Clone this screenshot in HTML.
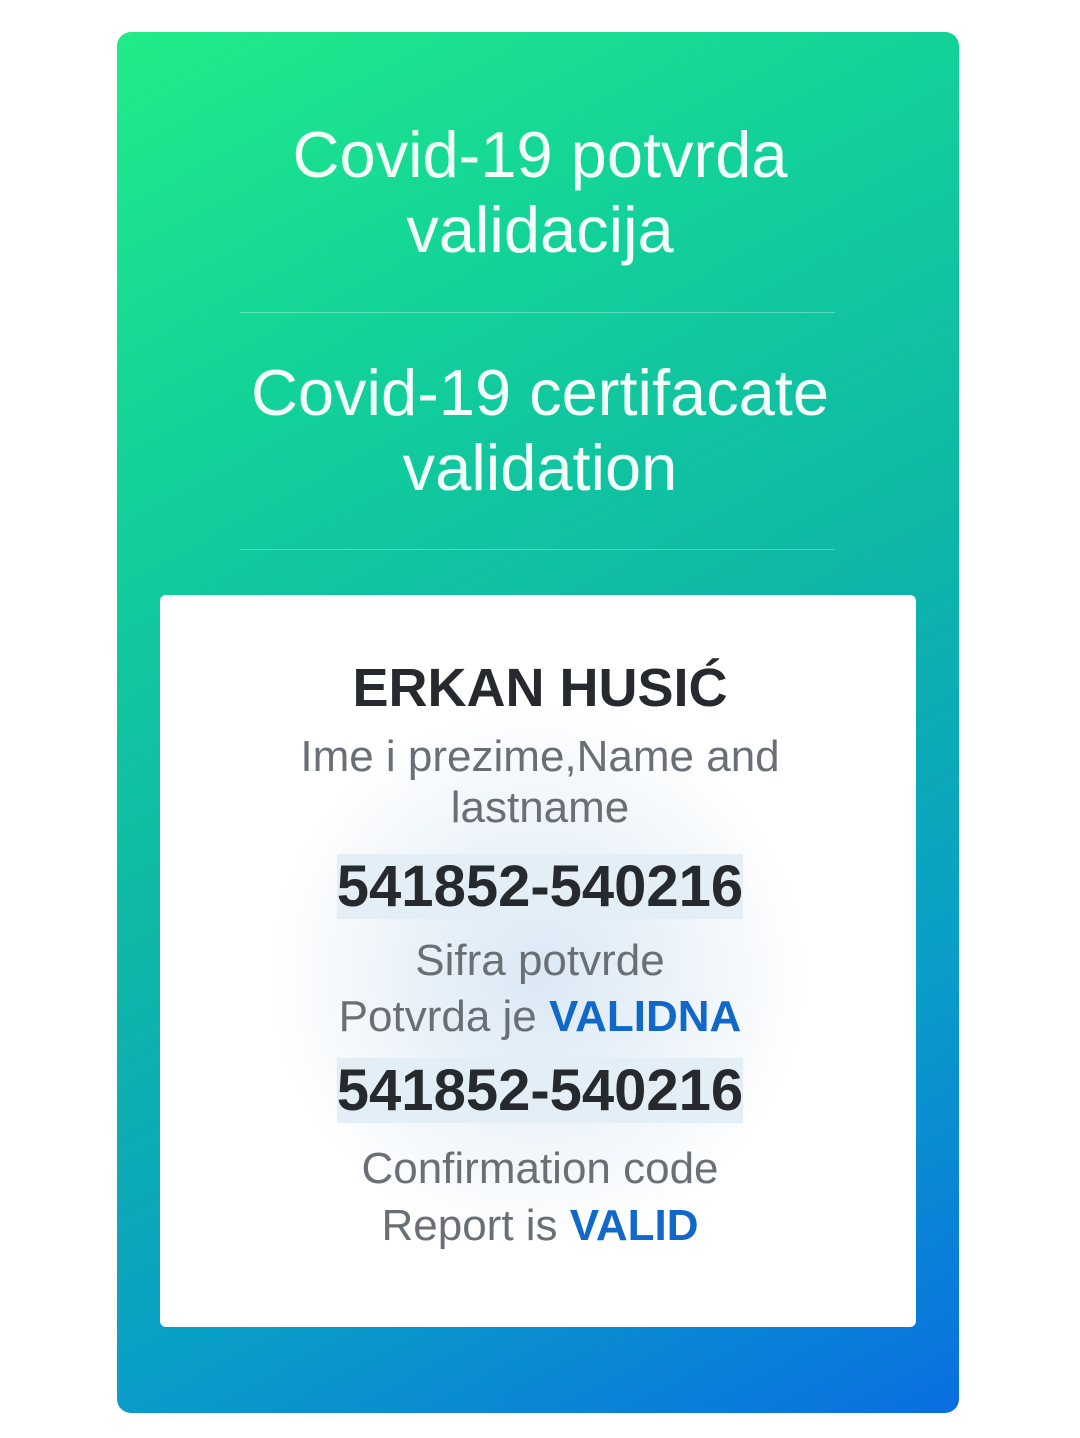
<!DOCTYPE html>
<html><head><meta charset="utf-8"><style>
html,body{margin:0;padding:0;background:#fff;}
body{width:1080px;height:1438px;position:relative;overflow:hidden;font-family:"Liberation Sans",sans-serif;}
.card{position:absolute;left:117px;top:32px;width:842px;height:1381px;border-radius:14px;
background:linear-gradient(152deg,#20ec88 0%,#12d19a 25%,#0fb7a6 50%,#0a9ec8 75%,#0a6ee2 100%);}
.inner{position:absolute;left:160px;top:595px;width:756px;height:732px;background:#fff;border-radius:6px;
background:radial-gradient(circle at 50% 52%,rgba(150,190,225,.35) 0,rgba(190,215,235,.25) 160px,rgba(255,255,255,0) 270px),#fff;}
.t{position:absolute;left:0;width:1080px;text-align:center;white-space:nowrap;line-height:1;}
.w{color:#f2fff8;font-size:65px;}
.line{position:absolute;left:240px;width:595px;height:1px;background:rgba(255,255,255,.3);}
.b{color:#26292e;font-weight:bold;}
.g{color:#6a6f76;font-size:44px;}
.v{color:#1268c8;font-weight:bold;}
.num{font-size:58px;}
.num span{background:#e4eef7;}
</style></head><body>
<div class="card"></div>
<div class="t w" style="top:122px">Covid-19 potvrda</div>
<div class="t w" style="top:197px">validacija</div>
<div class="line" style="top:312px"></div>
<div class="t w" style="top:360px">Covid-19 certifacate</div>
<div class="t w" style="top:435px">validation</div>
<div class="line" style="top:549px"></div>
<div class="inner"></div>
<div class="t b" style="top:661px;font-size:54px">ERKAN HUSIĆ</div>
<div class="t g" style="top:735px">Ime i prezime,Name and</div>
<div class="t g" style="top:786px">lastname</div>
<div class="t b num" style="top:858px"><span>541852-540216</span></div>
<div class="t g" style="top:939px">Sifra potvrde</div>
<div class="t g" style="top:995px">Potvrda je <span class="v">VALIDNA</span></div>
<div class="t b num" style="top:1062px"><span>541852-540216</span></div>
<div class="t g" style="top:1147px">Confirmation code</div>
<div class="t g" style="top:1204px">Report is <span class="v">VALID</span></div>
</body></html>
